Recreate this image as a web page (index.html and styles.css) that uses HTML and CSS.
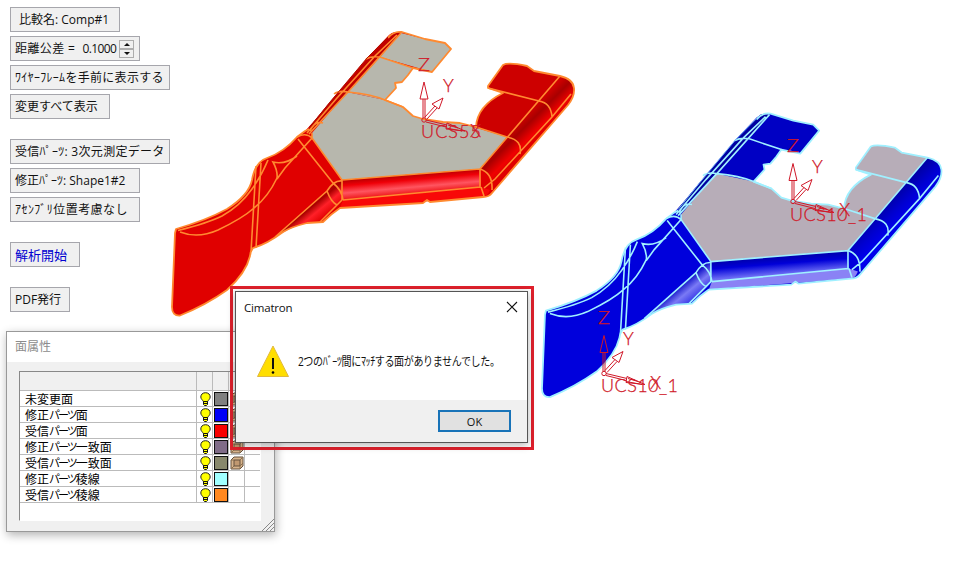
FILE: index.html
```html
<!DOCTYPE html>
<html lang="ja">
<head>
<meta charset="utf-8">
<title>Cimatron</title>
<link rel="stylesheet" href="styles.css">
</head>
<body>
<main class="viewport">
<svg class="scene" width="970" height="564" viewBox="0 0 970 564">
<defs>
<linearGradient id="rollRed" gradientUnits="userSpaceOnUse" x1="410" y1="173" x2="412" y2="196"><stop offset="0" stop-color="#a80000"/><stop offset=".3" stop-color="#ef0008"/><stop offset=".62" stop-color="#ff5560"/><stop offset="1" stop-color="#e80000"/></linearGradient>
<linearGradient id="rollBlue" gradientUnits="userSpaceOnUse" x1="410" y1="173" x2="412" y2="199"><stop offset="0" stop-color="#0000a0"/><stop offset=".35" stop-color="#0000d8"/><stop offset=".75" stop-color="#6a6af4"/><stop offset="1" stop-color="#8a82f5"/></linearGradient>
<linearGradient id="sideRed" gradientUnits="userSpaceOnUse" x1="510" y1="130" x2="527" y2="147"><stop offset="0" stop-color="#d00000"/><stop offset=".35" stop-color="#a80000"/><stop offset=".8" stop-color="#f00000"/><stop offset="1" stop-color="#e00000"/></linearGradient>
<linearGradient id="sideBlue" gradientUnits="userSpaceOnUse" x1="510" y1="130" x2="527" y2="147"><stop offset="0" stop-color="#0000a8"/><stop offset=".5" stop-color="#0000d0"/><stop offset="1" stop-color="#0000ee"/></linearGradient>
<linearGradient id="bendRed" gradientUnits="userSpaceOnUse" x1="302" y1="200" x2="320" y2="222"><stop offset="0" stop-color="#e00000"/><stop offset=".4" stop-color="#a80000"/><stop offset=".65" stop-color="#ff2028"/><stop offset="1" stop-color="#e00000"/></linearGradient>
<linearGradient id="bendBlue" gradientUnits="userSpaceOnUse" x1="302" y1="200" x2="320" y2="222"><stop offset="0" stop-color="#0000dc"/><stop offset=".25" stop-color="#0000c0"/><stop offset=".65" stop-color="#7a7af5"/><stop offset="1" stop-color="#3a3ae8"/></linearGradient>
<g id="part">
<path class="body" d="M176 229Q207 220 227 209Q249 195 252 180Q255 162 267 158Q284 152 297 137L305 131L317 118L330 102L367 58L388 36Q393 31 402 32L425 39L445 43L451 49L432 72L413 68L408 75L402 82L395 83L396 88L385 100L403 107L413 116L423 119L443 122L460 123L476 127Q477 106 503 93L488 88V86L503 65Q508 62 527 66L534 71L560 76Q573 79 574 88Q575 96 568 105L492 193Q489 197 483 197L430 202L427 200L423 203L340 208Q331 214 323 222L307 223Q291 227 283 232Q267 244 253 248Q250 252 250 256Q246 273 227 290Q206 305 180 315.500Q172 316 172 307L175 233Z"/>
<path class="edge-shade" d="M309 134L348 92L380 57L401 32L392 33L367 59L330 102L309 127Z"/>
<path class="arm" d="M401 33L425 39L445 43L451 49L432 72L380 57ZM380 57L413 68L408 75L402 82L395 83L396 88L385 100L348 92Z"/>
<path class="fork" d="M488 87L503 65Q508 62 527 66L534 71L560 76L539 101L503 93ZM503 93L539 101L507 137L476 129Q476 108 503 93Z"/>
<path class="plate" d="M347 92L385 100L403 107L413 116L423 119L443 122L460 123L507 137L480 169L342 180L312 138V133Z"/>
<path class="side" d="M560 76Q574 80 573 91Q571 99 568 103L492 190Q488 171 480 169Z"/>
<path class="roll" d="M342 180L480 169L481 187L343 200Z"/>
<path class="low" d="M343 200L481 187L490 190Q487 197 483 197L340 208Z"/>
<path class="bend" d="M327 191Q333 180 342 181L343 200Q334 211 320 222L307 223Q289 227 273 239Z"/>
<path class="line" d="M178 230.500Q208 223 222 216Q240 206 252 189Q262 175 268 160M180 232Q198 239 218 230Q243 218 254 208Q268 197 277 178M297 137Q306 132 312 138L285 168L277 179Q278 171 273 162Q285 165 297 156M298 139L333 183Q342 190 343 200M312 138L342 180M256 166L251 252M261 163L256 248M327 191Q334 180 342 181V200L320 222M327 191Q331 202 337 205M275 237L327 191M310 131Q315 120 323 123M307 133L337 98L375 56L397 35M309 134L348 92L401 33M312 138V133M366 59Q371 56 380 57L413 68M334 94Q339 90 348 92Q371 94 385 100L403 107M342 180L480 169V187L343 200M488 88L539 101Q551 103 552 117M476 127L507 137Q523 140 520 154M480 169Q493 173 492 190M480 169L560 76M481 187L484 196M484 188L495 179L552 117L571 94"/>
<path class="outline" d="M172 307L175 233L176 229Q207 220 227 209Q249 195 252 180Q255 162 267 158Q284 152 297 137L305 131L309 129M388 38Q393 31 402 32L425 39L445 43L451 49L432 72L413 68L408 75L402 82L395 83L396 88L385 100L403 107L413 116L423 119L443 122L460 123L476 127Q477 106 503 93L488 88V86L503 65Q508 62 527 66L534 71L560 76Q573 79 574 88Q575 96 568 105L492 193Q489 197 483 197L430 202L427 200L423 203L340 208Q331 214 323 222L307 223Q291 227 283 232Q267 244 253 248Q250 252 250 256Q246 273 227 290Q206 305 180 315.500Q172 316 172 307"/>
<path class="rim" d="M309 128L330 102L367 58L388 37"/>
</g>
<g id="axes">
<circle r="2.200"/>
<path d="M-1-2V-21M1-2V-21M-4-21L0-38L4-21ZM1-3L11-14M3-1L13-12M8-16L19-22L15-11ZM2 0L23 5M2 2L22 7M23 3L41 11L22 9Z"/>
<path d="M24 5L34 8M22 8L38 11"/>
</g>
</defs>
<use href="#part" class="received"/>
<use href="#part" class="modified" transform="translate(371.100 81.600) scale(.9935 1)"/>
<g class="ucs" transform="translate(424 120)"><use href="#axes"/><text x="-6" y="-49" textLength="12" lengthAdjust="spacingAndGlyphs">Z</text><text x="19" y="-28" textLength="12">Y</text><text x="46" y="17" textLength="12">X</text><text x="-3" y="18" textLength="60">UCS55</text></g>
<g class="ucs" transform="translate(793 201.500)"><use href="#axes"/><text x="-6" y="-50" textLength="12" lengthAdjust="spacingAndGlyphs">Z</text><text x="19" y="-29" textLength="12">Y</text><text x="46" y="14" textLength="12">X</text><text x="-3" y="19" textLength="77">UCS10_1</text></g>
<g class="ucs" transform="translate(604 373.500)"><use href="#axes"/><text x="-6" y="-50" textLength="12" lengthAdjust="spacingAndGlyphs">Z</text><text x="19" y="-29" textLength="12">Y</text><text x="46" y="15" textLength="12">X</text><text x="-3" y="18" textLength="77">UCS10_1</text></g>
</svg>

<nav class="tools">
<button class="tool w110 name">比較名: Comp#1</button>
<div class="tool w130"><span class="tolerance">距離公差 =</span><span class="value">0.1000</span><span class="spin"><i class="up"></i><i class="down"></i></span></div>
<button class="tool w160 wide">ﾜｲﾔｰﾌﾚｰﾑを手前に表示する</button>
<button class="tool w100">変更すべて表示</button>
<button class="tool w160 gap wide">受信ﾊﾟｰﾂ: 3次元測定データ</button>
<button class="tool w130">修正ﾊﾟｰﾂ: Shape1#2</button>
<button class="tool w130 wider">ｱｾﾝﾌﾞﾘ位置考慮なし</button>
<button class="tool w70 gap start">解析開始</button>
<button class="tool w60 gap">PDF発行</button>
</nav>

<section class="palette">
<header>面属性</header>
<svg class="defs" width="0" height="0">
<symbol id="bulb" viewBox="0 0 11 14"><path d="M5.500.7C2.500.7.8 2.600.8 5c0 2 2 3.200 2.500 4.500h4.400C8.200 8.200 10.200 7 10.200 5 10.200 2.600 8.500.7 5.500.7Z" fill="#ff0" stroke="#222"/><path d="M3.500 9.500h4v3l-1 1h-2l-1-1ZM3.500 11.500h4" fill="#ff0" stroke="#111"/></symbol>
<symbol id="cube" viewBox="0 0 14 14"><path d="M1 4L4 1h9v9l-3 3H1Z" fill="#d8b48c" stroke="#64503c"/><path d="M4 4h6v6H4Z" fill="#c09870" stroke="#64503c"/><path d="M10 13V10l3-3M10 4l3-3M1 13l3-3M1 4h3" fill="none" stroke="#8a7050"/></symbol>
</svg>
<div class="grid">
<div class="row head"><span></span><span></span><span></span><span></span><span></span></div>
<div class="row"><span class="label">未変更面</span><span><svg class="bulb"><use href="#bulb"/></svg></span><span><i class="chip gray"></i></span><span><svg class="cube"><use href="#cube"/></svg></span><span></span></div>
<div class="row"><span class="label">修正<b>パーツ</b>面</span><span><svg class="bulb"><use href="#bulb"/></svg></span><span><i class="chip blue"></i></span><span><svg class="cube"><use href="#cube"/></svg></span><span></span></div>
<div class="row"><span class="label">受信<b>パーツ</b>面</span><span><svg class="bulb"><use href="#bulb"/></svg></span><span><i class="chip red"></i></span><span><svg class="cube"><use href="#cube"/></svg></span><span></span></div>
<div class="row"><span class="label">修正<b>パーツ</b>一致面</span><span><svg class="bulb"><use href="#bulb"/></svg></span><span><i class="chip mauve"></i></span><span><svg class="cube"><use href="#cube"/></svg></span><span></span></div>
<div class="row"><span class="label">受信<b>パーツ</b>一致面</span><span><svg class="bulb"><use href="#bulb"/></svg></span><span><i class="chip olive"></i></span><span><svg class="cube"><use href="#cube"/></svg></span><span></span></div>
<div class="row"><span class="label">修正<b>パーツ</b>稜線</span><span><svg class="bulb"><use href="#bulb"/></svg></span><span><i class="chip cyan"></i></span><span></span><span></span></div>
<div class="row"><span class="label">受信<b>パーツ</b>稜線</span><span><svg class="bulb"><use href="#bulb"/></svg></span><span><i class="chip orange"></i></span><span></span><span></span></div>
</div>
<svg class="grip" width="12" height="12"><path d="M0 12L12 0M4 12L12 4M8 12L12 8" stroke="#888" fill="none"/></svg>
</section>

<div class="frame">
<section class="dialog">
<header><span>Cimatron</span><svg width="12" height="12"><path d="M1 1L11 11M11 1L1 11" stroke="#111" stroke-width="1.100"/></svg></header>
<div class="message"><svg width="32" height="32"><path d="M16 1L31.500 31.500H.5Z" fill="#ffde00" stroke="#e0b840"/><path d="M16 13V24" stroke="#111" stroke-width="2"/><circle cx="16" cy="27.500" r="1.300"/></svg><p>2つの<span class="half">ﾊﾞｰﾂ</span>間に<span class="half">ﾏｯﾁ</span>する面がありませんでした。</p></div>
<footer><button class="ok">OK</button></footer>
</section>
</div>
</main>
</body>
</html>
```
FILE: styles.css
```css
* { box-sizing: border-box; }
body { margin: 0; background: #fff; font-family: "Open Sans", "Noto Sans CJK JP", sans-serif; color: #111; }
button { font: inherit; color: inherit; margin: 0; text-align: left; }
.viewport { position: relative; width: 970px; height: 564px; overflow: hidden; }
.scene { position: absolute; left: 0; top: 0; }

.received { --body: #e00000; --shade: #c00000; --arm: #b7b7ad; --fork: #cd0000; --plate: #b7b7ad; --low: #f80808; --line: #ff8a30; --rim: #b01000; --roll: url(#rollRed); --side: url(#sideRed); --bend: url(#bendRed); }
.modified { --body: #0000dc; --shade: #0000a0; --arm: #0000c4; --fork: #b7adb8; --plate: #b7adb8; --low: #8a82f5; --line: #a0f0ff; --rim: #70b0f0; --roll: url(#rollBlue); --side: url(#sideBlue); --bend: url(#bendBlue); }
.body { fill: var(--body); }
.edge-shade { fill: var(--shade); }
.arm { fill: var(--arm); }
.fork { fill: var(--fork); }
.plate { fill: var(--plate); }
.side { fill: var(--side); }
.roll { fill: var(--roll); }
.low { fill: var(--low); }
.bend { fill: var(--bend); }
.line { fill: none; stroke: var(--line); stroke-width: 1.6; }
.outline { fill: none; stroke: var(--line); stroke-width: 1.8; stroke-linejoin: round; }
.rim { fill: none; stroke: var(--rim); stroke-width: 1; }
.ucs { fill: none; stroke: #d01828; stroke-width: 1; }
.ucs text { fill: #d01828; stroke-width: .25; font: 300 18px Lato, sans-serif; }

.tools { position: relative; display: flex; flex-direction: column; align-items: flex-start; gap: 4px; padding: 7px 0 0 10px; }
.tool { display: flex; align-items: center; height: 25px; padding: 1px 0 0 4px; border: 1px solid #a6a6ac; background: #f0f0f0; font-size: 12px; line-height: 22px; white-space: nowrap; }
.w60 { width: 60px; }
.w70 { width: 70px; }
.w100 { width: 100px; }
.w110 { width: 110px; }
.w130 { width: 130px; }
.w160 { width: 160px; }
.gap { margin-top: 16px; }
.name { padding-left: 8px; }
.wide { letter-spacing: .3px; }
.wider { letter-spacing: .45px; }
.tolerance { letter-spacing: .4px; }
.value { width: 34px; margin-left: 7px; letter-spacing: -.6px; }
.start { color: #0000d0; font-size: 13px; }
.spin { display: flex; flex-direction: column; margin-left: 3px; }
.spin i { display: flex; align-items: center; justify-content: center; width: 15px; height: 9px; border: 1px solid #adadad; }
.spin i::after { content: ""; border: 3px solid transparent; }
.up::after { border-top-width: 0 !important; border-bottom-color: #111 !important; }
.down::after { border-bottom-width: 0 !important; border-top-color: #111 !important; }

.palette { position: absolute; left: 6px; top: 331px; width: 269px; height: 201px; border: 1px solid #999; background: #f0f0f0; box-shadow: 1px 3px 9px rgba(0,0,0,.3); }
.palette header { height: 30px; padding-left: 8px; background: #fff; color: #8c8c8c; font-size: 12px; line-height: 30px; }
.defs { position: absolute; }
.grid { width: 242px; height: 150px; margin: 9px 0 0 12px; border: 1px solid #888; border-right-color: #fff; border-bottom-color: #fff; background: #fff; font: 12px/15px "Noto Sans CJK JP", sans-serif; }
.row { display: grid; grid-template-columns: 177px 16px 16px 16px 16px; height: 16px; border-bottom: 1px solid #bbb; }
.row.head { height: 19px; background: #f0f0f0; }
.row > span { display: flex; align-items: center; justify-content: center; border-right: 1px solid #bbb; }
.row > span:last-child { border-right: 0; }
.row > .label { justify-content: flex-start; padding-left: 5px; height: 15px; color: #000; }
.label b { font-size: 11px; font-weight: 400; letter-spacing: -2px; }
.bulb { width: 11px; height: 14px; margin-left: 2px; }
.cube { width: 14px; height: 14px; }
.chip { width: 14px; height: 14px; border: 1px solid #111; }
.gray { background: #808080; }
.blue { background: #0000f8; }
.red { background: #f80000; }
.mauve { background: #806c88; }
.olive { background: #88886c; }
.cyan { background: #a0ffff; }
.orange { background: #ff8820; }
.grip { position: absolute; right: 0; bottom: 0; }

.frame { position: absolute; left: 230px; top: 286px; width: 304px; height: 164px; padding: 2px; border: 3px solid #e0202c; }
.dialog { display: flex; flex-direction: column; width: 293px; height: 152px; border: 1px solid #555; background: #fff; font-size: 11.5px; box-shadow: 0 2px 8px rgba(0,0,0,.3); }
.dialog header { display: flex; justify-content: space-between; align-items: center; height: 30px; padding: 0 9px 0 8px; }
.dialog header span { letter-spacing: -.2px; }
.message { flex: 1; display: flex; align-items: center; gap: 9px; padding: 0 0 0 21px; }
.message svg { flex: none; }
.message p { margin: 0; font-size: 12px; letter-spacing: -.5px; white-space: nowrap; transform: scaleX(.84); transform-origin: left; }
.half { letter-spacing: -.5px; }
.dialog footer { display: flex; justify-content: flex-end; height: 42px; padding: 10px 16px 0 0; background: #f0f0f0; }
.ok { width: 73px; height: 22px; padding: 0; border: 2px solid #1873b8; background: #e1e1e1; font-size: 11px; text-align: center; line-height: 20px; }
```
